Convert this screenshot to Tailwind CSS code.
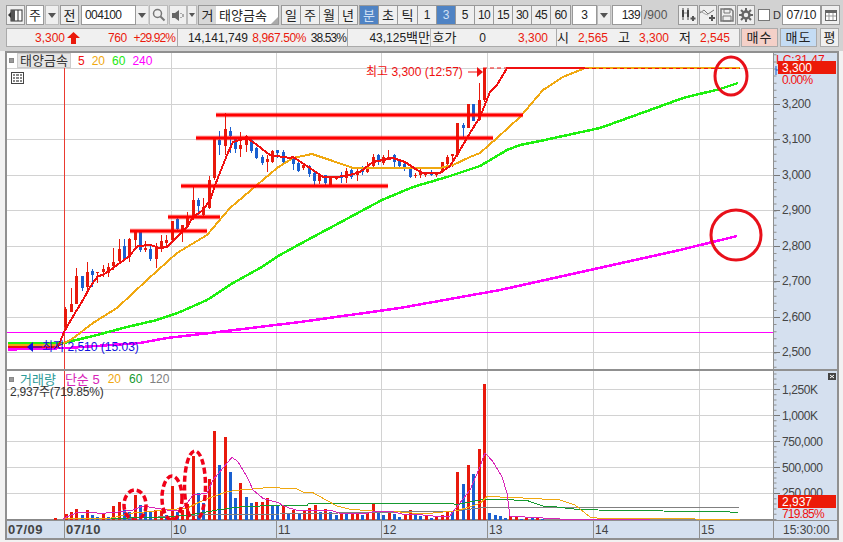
<!DOCTYPE html>
<html lang="ko">
<head>
<meta charset="utf-8">
<script src="https://cdn.jsdelivr.net/npm/@tailwindcss/browser@4"></script>
<title>태양금속</title>
</head>
<body class="w-[843px] h-[542px] overflow-hidden bg-[#f2f2f2] text-[12px] leading-none text-[#222] font-['Liberation_Sans','Noto_Sans_CJK_KR',sans-serif]">
<header class="h-[51px] bg-[#d2d2d2] pl-[6px] pt-[5px]">
  <div class="flex h-[20px] gap-[1px]">
    <div class="w-[19px] flex items-center justify-center bg-[#efefef] border border-[#999]"><svg width="15" height="13" viewBox="0 0 15 13"><path d="M0 6l3-3v6z" fill="#333"/><rect x="3" y="1" width="11" height="11" fill="#fff" stroke="#333"/><path d="M3 1h4v11H3z" fill="#555"/><path d="M10 1v11" stroke="#333"/></svg></div>
    <div class="w-[18px] flex items-center justify-center bg-white border border-[#999] text-[13px]">주</div>
    <div class="w-[14px] flex items-center justify-center bg-[#efefef] border border-[#bbb]"><span class="border-x-[4px] border-x-transparent border-t-[5px] border-t-[#555]"></span></div>
    <div class="w-[19px] flex items-center justify-center bg-[#efefef] border border-[#999] text-[13px]">전</div>
    <div class="w-[55px] ml-[1px] flex items-center pl-[3px] bg-white border border-[#999] tracking-[-0.6px]">004100</div>
    <div class="w-[12px] flex items-center justify-center bg-[#efefef] border-y border-[#bbb] -ml-[1px]"><span class="border-x-[4px] border-x-transparent border-t-[5px] border-t-[#555]"></span></div>
    <div class="w-[19px] flex items-center justify-center bg-[#efefef] border border-[#bbb]"><svg width="14" height="14" viewBox="0 0 14 14"><circle cx="5.500" cy="5.500" r="4" fill="none" stroke="#777" stroke-width="1.500"/><path d="M8.500 8.500l4 4" stroke="#777" stroke-width="2"/></svg></div>
    <div class="w-[18px] flex items-center justify-center bg-[#efefef] border border-[#bbb]"><svg width="14" height="13" viewBox="0 0 14 13"><path d="M1 4h3l4-3v11L4 9H1z" fill="#666"/><path d="M10 4v1M10 8v1M12 5v3" stroke="#666"/></svg></div>
    <div class="w-[10px] flex items-center justify-center bg-[#efefef] border border-[#bbb] -ml-[1px]"><span class="border-x-[3px] border-x-transparent border-t-[4px] border-t-[#555]"></span></div>
    <div class="relative w-[81px] flex items-center bg-white border border-[#999] text-[13px]"><span class="w-[17px] h-[18px] flex items-center justify-center bg-[#d8d8d8]">거</span><span class="ml-[3px]">태양금속</span><span class="absolute right-0 bottom-0 w-0 h-0 border-l-[7px] border-l-transparent border-b-[7px] border-b-[#aaa]"></span></div>
    <div class="flex ml-[1px] text-[13px]">
      <div class="w-[20px] flex items-center justify-center bg-[#efefef] border border-[#999]">일</div>
      <div class="w-[19px] flex items-center justify-center bg-[#efefef] border border-l-0 border-[#999]">주</div>
      <div class="w-[19px] flex items-center justify-center bg-[#efefef] border border-l-0 border-[#999]">월</div>
      <div class="w-[19px] flex items-center justify-center bg-[#efefef] border border-l-0 border-[#999]">년</div>
    </div>
    <div class="flex">
      <div class="w-[20px] flex items-center justify-center bg-[#4f83c4] text-[#cfe0f5] border border-[#999] text-[13px]">분</div>
      <div class="w-[19px] flex items-center justify-center bg-[#efefef] border border-l-0 border-[#999] text-[13px]">초</div>
      <div class="w-[20px] flex items-center justify-center bg-[#efefef] border border-l-0 border-[#999] text-[13px]">틱</div>
      <div class="w-[19px] flex items-center justify-center bg-[#efefef] border border-l-0 border-[#999]">1</div>
      <div class="w-[19px] flex items-center justify-center bg-[#4f83c4] text-[#cfe0f5] border border-l-0 border-[#999]">3</div>
      <div class="w-[19px] flex items-center justify-center bg-[#efefef] border border-l-0 border-[#999]">5</div>
      <div class="w-[19px] flex items-center justify-center bg-[#efefef] border border-l-0 border-[#999] tracking-[-0.6px]">10</div>
      <div class="w-[19px] flex items-center justify-center bg-[#efefef] border border-l-0 border-[#999] tracking-[-0.6px]">15</div>
      <div class="w-[19px] flex items-center justify-center bg-[#efefef] border border-l-0 border-[#999] tracking-[-0.6px]">30</div>
      <div class="w-[19px] flex items-center justify-center bg-[#efefef] border border-l-0 border-[#999] tracking-[-0.6px]">45</div>
      <div class="w-[20px] flex items-center justify-center bg-[#efefef] border border-l-0 border-[#999] tracking-[-0.6px]">60</div>
    </div>
    <div class="w-[25px] flex items-center justify-center bg-white border border-[#999]">3</div>
    <div class="w-[14px] -ml-[1px] flex items-center justify-center bg-[#efefef] border border-[#bbb]"><span class="border-x-[4px] border-x-transparent border-t-[5px] border-t-[#555]"></span></div>
    <div class="w-[30px] flex items-center justify-end pr-[1px] bg-white border border-[#999] tracking-[-0.6px]">139</div>
    <div class="w-[34px] flex items-center text-[#555] pl-[1px]">/900</div>
    <div class="w-[20px] flex items-center justify-center bg-[#efefef] border border-[#999]"><svg width="16" height="14" viewBox="0 0 16 14"><path d="M2 2h2v7H2zM7 2h2v7H7z" fill="#444"/><path d="M3 0v12M8 0v12" stroke="#444"/><path d="M4 5h3" stroke="#888"/><path d="M13 8v5M10.500 10.500h5" stroke="#555" stroke-width="2"/></svg></div>
    <div class="w-[18px] flex items-center justify-center bg-[#efefef] border border-[#999]"><svg width="16" height="14" viewBox="0 0 16 14"><path d="M0 5l4-3 4 4 6-4" fill="none" stroke="#777"/><path d="M0 3l5 3 3 1" fill="none" stroke="#aaa"/><path d="M12 7v6M9 10h6" stroke="#555" stroke-width="2"/></svg></div>
    <div class="w-[18px] flex items-center justify-center bg-[#efefef] border border-[#999]"><svg width="14" height="14" viewBox="0 0 14 14"><path d="M1 1h10l2 2v10H1z" fill="none" stroke="#777" stroke-width="1.500"/><path d="M4 1h6v4H4zM3 8h8v5H3z" fill="none" stroke="#777"/></svg></div>
    <div class="w-[18px] flex items-center justify-center bg-[#efefef] border border-[#999]"><svg width="14" height="14" viewBox="0 0 14 14"><circle cx="7" cy="7" r="3.500" fill="none" stroke="#666" stroke-width="2.500"/><path d="M7 0v3M7 11v3M0 7h3M11 7h3M2 2l2 2M10 10l2 2M12 2l-2 2M4 10l-2 2" stroke="#666" stroke-width="2"/></svg></div>
    <div class="w-[12px] h-[12px] self-center ml-[2px] bg-white border border-[#777]"></div>
    <div class="w-[10px] flex items-center text-[11px] text-[#333] pl-[2px]">D</div>
    <div class="w-[39px] flex items-center justify-center bg-white border border-[#999]">07/10</div>
    <div class="w-[19px] -ml-[1px] flex items-center justify-center bg-[#efefef] border border-[#999]"><svg width="12" height="12" viewBox="0 0 12 12"><rect x=".5" y="1.500" width="11" height="10" fill="#fff" stroke="#666"/><path d="M0 2h12v2H0z" fill="#666"/><path d="M4 4v7M8 4v7M1 7h10" stroke="#999"/></svg></div>
  </div>
  <div class="flex h-[19px] mt-[3px]">
    <div class="w-[172px] flex items-center bg-[#f0f0f0] border border-[#aaa] text-[#ea1a0c]">
      <span class="w-[58px] text-right">3,300</span>
      <svg class="ml-[2px]" width="13" height="12" viewBox="0 0 13 12"><path d="M6.500 0L13 6H9v6H4V6H0z" fill="#ea1a0c"/></svg>
      <span class="w-[47px] text-right tracking-[-0.3px]">760</span>
      <span class="w-[48px] text-right tracking-[-0.9px]">+29.92%</span>
    </div>
    <div class="w-[170px] flex items-center bg-[#f0f0f0] border border-l-0 border-[#aaa]">
      <span class="w-[70px] text-right">14,141,749</span>
      <span class="w-[58px] text-right text-[#ea1a0c] tracking-[-0.4px]">8,967.50%</span>
      <span class="w-[40px] text-right tracking-[-0.9px]">38.53%</span>
    </div>
    <div class="w-[209px] flex items-center bg-[#f0f0f0] border border-l-0 border-[#aaa]">
      <span class="w-[82px] text-right">43,125<span class="text-[13px]">백만</span></span>
      <span class="w-[28px] h-full flex items-center justify-center border-l border-[#bbb] text-[13px]">호가</span>
      <span class="w-[28px] text-right">0</span>
      <span class="w-[62px] text-right text-[#ea1a0c]">3,300</span>
    </div>
    <div class="w-[183px] flex items-center bg-[#f0f0f0] border border-l-0 border-[#aaa]">
      <span class="w-[12px] text-center text-[13px]">시</span>
      <span class="w-[39px] text-right text-[#ea1a0c]">2,565</span>
      <span class="w-[22px] text-right text-[13px]">고</span>
      <span class="w-[39px] text-right text-[#ea1a0c]">3,300</span>
      <span class="w-[22px] text-right text-[13px]">저</span>
      <span class="w-[39px] text-right text-[#ea1a0c]">2,545</span>
    </div>
    <div class="w-[37px] ml-[1px] flex items-center justify-center bg-[#f4d0c8] border border-[#aaa] text-[13px] tracking-[1px]">매수</div>
    <div class="w-[37px] ml-[2px] flex items-center justify-center bg-[#c4dcf4] border border-[#aaa] text-[13px] tracking-[1px]">매도</div>
    <div class="w-[19px] ml-[3px] flex items-center justify-center bg-[#f0f0f0] border border-[#aaa] text-[13px]">평</div>
  </div>
</header>
<main class="w-[834px] h-[489px] ml-[5px] border-2 border-[#909090] bg-white flex flex-col">
  <section class="flex h-[316px] shrink-0">
    <div class="relative w-[766px] bg-white">
      <svg class="block" width="766" height="316" viewBox="7 53 766 316" fill="none">
        <path d="M7 68.500H773M7 104.500H773M7 139.500H773M7 175.500H773M7 210.500H773M7 246.500H773M7 281.500H773M7 317.500H773M7 352.500H773M171.500 53V369M276.500 53V369M381.500 53V369M487.500 53V369M593.500 53V369M699.500 53V369" stroke="#d2d2d2"/>
        <path d="M64.500 53V369" stroke="#ea3a30"/>
        <path d="M6 332.500H773" stroke="#ff00ff"/>
        <g transform="translate(60 100) scale(.33333)" shape-rendering="crispEdges">
          <path d="M18 620V692M34 565V635M49 505V612M82 487V572M113 515V550M130 495V530M145 490V530M160 445V510M178 418V490M208 415V487M226 395V450M256 422V455M289 430V503M304 405V455M319 405V445M337 363V420M367 375V425M382 335V385M400 260V360M430 295V350M448 228V328M464 115V240M496 40V165M541 97V170M559 105V155M622 165V215M637 150V190" stroke="#e8190c" stroke-width="3"/>
          <path d="M18 628V680M34 612V635M49 528V612M82 515V560M113 515V520M130 507V515M145 500V518M160 487V498M178 447V483M208 417V470M226 395V420M256 445V450M289 445V476M304 423V445M319 420V430M337 363V420M367 375V395M382 350V382M400 300V350M430 320V345M448 240V325M464 115V235M496 87V137M541 135V147M559 108V135M622 177V187M637 152V185" stroke="#e8190c" stroke-width="9"/>
          <path d="M67 528V572M97 508V560M193 418V480M241 395V455M271 433V482M352 355V395M415 295V345M478 92V165M511 82V158M526 118V160M574 118V158M589 140V177M607 165V195M652 150V175M670 150V190M700 170V210M717 182V215" stroke="#1a5fd0" stroke-width="3"/>
          <path d="M67 528V563M97 513V525M193 438V477M241 395V450M271 448V476M352 358V388M415 300V318M478 120V135M511 93V108M526 118V148M574 120V152M589 145V173M607 172V188M652 150V158M670 157V185M700 177V192M717 190V213" stroke="#1a5fd0" stroke-width="9"/>
        </g>
        <g transform="translate(280 60) scale(.33333)" shape-rendering="crispEdges">
          <path d="M72 312V330M120 345V372M152 350V375M169 347V360M199 325V370M232 325V362M263 305V340M280 282V322M310 285V315M327 270V300M406 340V355M422 325V355M438 335V352M470 335V350M487 305V340M502 285V318M517 283V320M532 190V290M565 132V205M598 70V183M613 25V125" stroke="#e8190c" stroke-width="3"/>
          <path d="M72 315V323M120 345V362M152 350V375M169 348V357M199 333V355M232 333V345M263 323V335M280 290V318M310 290V310M327 290V297M406 345V347M422 335V345M438 337V345M470 338V345M487 305V335M502 290V312M517 283V288M532 190V285M565 132V205M598 120V180M613 25V120" stroke="#e8190c" stroke-width="9"/>
          <path d="M88 315V350M105 335V375M136 345V378M184 335V368M216 325V358M248 318V345M295 283V315M343 282V320M358 297V325M375 308V333M392 320V355M454 330V348M550 190V235M580 132V182" stroke="#1a5fd0" stroke-width="3"/>
          <path d="M88 318V342M105 338V362M136 345V370M184 345V355M216 330V352M248 323V335M295 285V305M343 285V305M358 303V317M375 312V328M392 325V352M454 335V345M550 195V205M580 132V182" stroke="#1a5fd0" stroke-width="9"/>
        </g>
        <g stroke-width="2" stroke-linejoin="round" shape-rendering="crispEdges">
          <path d="M8 349.500L67 348L140 343L167 338L210 333L300 322L400 308L500 290L590 270L680 250L737 236" stroke="#ff00ff" stroke-width="2.500"/>
          <path d="M8 343H64L97 335L127 327L157 320L180 312L207 300L233 283L260 268L280 255L300 244L382 200L413 187L447 177L480 166L507 150L520 145L540 141L600 128L650 110L683 98L720 89L738 83" stroke="#1ef010" stroke-width="2.500"/>
          <path d="M8 345H60L72 339L93 323L117 308L147 280L177 253L207 235L230 208L257 185L277 168L293 158L312 154L330 160L353 168L373 168H440L453 165L470 157L480 153L497 138L520 117L543 90L563 77L585 68H740" stroke="#f0a810"/>
          <path d="M8 347H58L64 332L75 313L83 300L90 287L98 276L103 275L113 268L128 257L138 246L150 245L160 248L167 247L177 237L187 227L193 217L203 210L210 200L217 180L227 155L233 142L247 138L257 145L270 155L290 158L293 157L310 168L323 177L337 177L350 175L360 172L373 162L393 158L405 162L417 170L423 173L440 173L450 166L460 150L470 133L480 117L490 92L497 85L507 68H585" stroke="#f01010"/>
        </g>
        <path d="M483 68H507M585 68.500H740" stroke="#f01010" stroke-dasharray="4 3"/>
        <path d="M216 115H523M196 138H493M181 186H388M168 217H220M130 231H207" stroke="#ff0000" stroke-opacity=".3" stroke-width="5"/>
        <path d="M216 115H523M196 138H493M181 186H388M168 217H220M130 231H207" stroke="#ff0000" stroke-width="3"/>
        <ellipse cx="731" cy="76" rx="16" ry="19" stroke="#e8101a" stroke-width="3"/>
        <circle cx="736" cy="235" r="25" stroke="#e8101a" stroke-width="3"/>
        <path d="M468 72H478" stroke="#f01010"/>
        <path d="M477 67L483 72L477 77Z" fill="#f01010"/>
        <path d="M27 347L33 342V352Z" fill="#1010e0"/>
        <path d="M33 347H42" stroke="#1010e0"/>
        <text x="366" y="75.500" fill="#f01010" font-size="12">최고 3,300 (12:57)</text>
        <text x="42" y="351" fill="#1010e0" font-size="12">최저 2,510 (15:03)</text>
      </svg>
      <div class="absolute left-0 top-0 flex items-center h-[15px]">
        <span class="w-[5px] h-[5px] ml-[2px] bg-[#999] border border-[#888]"></span>
        <span class="ml-[3px] h-[15px] w-[54px] flex items-center justify-center bg-[#e6e6e6] border border-[#ccc] text-[#333] text-[13px]">태양금속</span>
        <span class="ml-[7px] text-[#f01010]">5</span>
        <span class="ml-[7px] text-[#f0a810]">20</span>
        <span class="ml-[7px] text-[#22e810]">60</span>
        <span class="ml-[7px] text-[#ff00ff]">240</span>
      </div>
      <div class="absolute left-[4px] top-[19px] w-[13px] h-[12px] border border-[#444] bg-white grid grid-cols-3 grid-rows-3 gap-[1px] p-[1px]">
        <span class="bg-[#888]"></span><span class="bg-[#888]"></span><span class="bg-[#888]"></span><span class="bg-[#888]"></span><span class="bg-[#888]"></span><span class="bg-[#888]"></span><span class="bg-[#888]"></span><span class="bg-[#888]"></span><span class="bg-[#888]"></span>
      </div>
    </div>
    <div class="relative w-[64px] bg-[#d5e0ef] border-l border-[#909090]">
      <svg class="block" width="63" height="316" viewBox="774 53 63 316" fill="none">
        <path d="M775 54.300V369" stroke="#909090" stroke-width="3" stroke-dasharray="1 6.100"/>
        <path d="M774 104.500H780M774 139.500H780M774 175.500H780M774 210.500H780M774 246.500H780M774 281.500H780M774 317.500H780M774 352.500H780" stroke="#777"/>
        <g fill="#444" font-size="12" letter-spacing="-.3">
          <text x="782" y="108">3,200</text><text x="782" y="143">3,100</text><text x="782" y="179">3,000</text><text x="782" y="214">2,900</text><text x="782" y="250">2,800</text><text x="782" y="285">2,700</text><text x="782" y="321">2,600</text><text x="782" y="356">2,500</text>
        </g>
        <text x="776" y="63.500" fill="#f01010" font-size="12">LC:31.47</text>
        <path d="M776 66v9M776 70h3" stroke="#1a5fd0"/>
        <text x="782" y="84" fill="#f01010" font-size="12" letter-spacing="-.7">0.00%</text>
      </svg>
      <span class="absolute left-[4px] top-[8px] w-[58px] h-[13px] pl-[4px] flex items-center bg-[#ec1a08] text-white">3,300</span>
    </div>
  </section>
  <div class="h-[2px] bg-[#909090] shrink-0"></div>
  <section class="flex h-[149px] shrink-0">
    <div class="relative w-[766px] bg-white">
      <svg class="block" width="766" height="149" viewBox="7 371 766 149" fill="none">
        <path d="M7 389.500H773M7 415.500H773M7 441.500H773M7 467.500H773M7 493.500H773M171.500 371V520M276.500 371V520M381.500 371V520M487.500 371V520M593.500 371V520M699.500 371V520" stroke="#d2d2d2"/>
        <path d="M64.500 371V520" stroke="#ea3a30"/>
        <path d="M7 519.500H773" stroke="#888"/>
        <path d="M55.500 518V520M66.500 514V520M71.500 512V520M76.500 509V520M87.500 510V520M103.500 513V520M113.500 506V520M119.500 502V520M135.500 495V520M155.500 510V520M161.500 510V520M172.500 486V520M182.500 510V520M187.500 504V520M193.500 456V520M209.500 479V520M214.500 431V520M225.500 437V520M240.500 483V520M256.500 502V520M262.500 502V520M267.500 498V520M283.500 505V520M293.500 510V520M304.500 510V520M309.500 508V520M315.500 505V520M325.500 509V520M341.500 513V520M352.500 513V520M357.500 513V520M367.500 512V520M373.500 504V520M389.500 512V520M405.500 514V520M410.500 510V520M426.500 516V520M436.500 516V520M442.500 515V520M447.500 512V520M457.500 472V520M468.500 465V520M479.500 449V520M484.500 384V520M510.500 516V520M516.500 517V520M526.500 517V520M537.500 517V520" stroke="#e8190c" stroke-width="3"/>
        <path d="M82.500 515V520M92.500 515V520M97.500 517V520M108.500 517V520M124.500 510V520M129.500 512V520M140.500 505V520M145.500 510V520M150.500 512V520M166.500 515V520M177.500 512V520M198.500 493V520M203.500 503V520M219.500 465V520M230.500 472V520M235.500 498V520M246.500 497V520M251.500 503V520M272.500 505V520M277.500 505V520M288.500 513V520M299.500 513V520M320.500 512V520M330.500 512V520M336.500 515V520M346.500 513V520M362.500 515V520M378.500 511V520M383.500 515V520M394.500 514V520M399.500 517V520M415.500 515V520M420.500 516V520M431.500 518V520M452.500 512V520M463.500 484V520M473.500 474V520M489.500 513V520M495.500 515V520M500.500 516V520M505.500 518V520M521.500 519V520M532.500 518V520M542.500 519V520" stroke="#1a5fd0" stroke-width="3"/>
        <g stroke-width="1" stroke-linejoin="round" shape-rendering="crispEdges">
          <path d="M117 519L200 515L280 514L397 512L453 511L480 508L487 507.500H739" stroke="#808080"/>
          <path d="M90 519L167 517L190 515L217 510L240 507L280 505L307 505.500L308 504L343 503.500H450L457 504.500L480 500L487 499L527 500.500L543 506L557 507L578 509.500L598 510L630 510.500L730 512L738 513" stroke="#159a30"/>
          <path d="M63 519L110 518.300L133 513L150 511.500L173 509.300L187 508.300L200 501.700L213 496.700L227 491.700L240 490L267 487.700L280 488L295 488L303 492L313 492.700L323 498.300L337 506L350 509.300L373 511L397 511.700L423 514L457 510.700L470 506.700L480 503.300L487 496.700L493 496.700L530 498.300L560 500L575 505L590 517L600 518.500H650L740 519.500" stroke="#f0a810"/>
          <path d="M63 519L67 516.700L77 512.700L90 512.300L100 513.300L113 512.700L133 510L143 506L157 508.300L167 510L180 510L187 503.300L193 495L207 493.300L213 480L227 463.300L232 457.300L238 461.700L247 476.700L253 490L263 498.300L280 503.300L280 504.300L290 508.300L300 511L320 510.700L330 510L340 513.300L363 514L377 511L393 511.700L403 514.300L423 515L433 516L450 516L457 506.700L470 490L480 466.700L485 452.700L493 461.700L502 476.700L507 493.300L510 516L520 516.700L560 519L650 519.300" stroke="#d824b8"/>
        </g>
        <g stroke="#f00018" stroke-width="3.500" stroke-dasharray="6 3">
          <ellipse cx="135" cy="505" rx="11" ry="15"/>
          <ellipse cx="172" cy="498" rx="10" ry="22"/>
          <ellipse cx="195" cy="486" rx="10.500" ry="35"/>
        </g>
      </svg>
      <div class="absolute left-0 top-0 flex items-center h-[14px] mt-[1px]">
        <span class="w-[5px] h-[5px] ml-[2px] bg-[#999] border border-[#888]"></span>
        <span class="ml-[6px] text-[#2a9a98] text-[13px]">거래량</span>
        <span class="ml-[9px] text-[#d824b8] text-[13px]">단순 5</span>
        <span class="ml-[8px] text-[#f0a810]">20</span>
        <span class="ml-[8px] text-[#159a30]">60</span>
        <span class="ml-[7px] text-[#808080]">120</span>
      </div>
      <span class="absolute left-[3px] top-[15px] text-[#333] tracking-[-0.2px]">2,937주(719.85%)</span>
    </div>
    <div class="relative w-[64px] bg-[#d5e0ef] border-l border-[#909090]">
      <svg class="block" width="63" height="149" viewBox="774 371 63 149" fill="none">
        <path d="M775 373.400V520" stroke="#909090" stroke-width="3" stroke-dasharray="1 4.200"/>
        <path d="M774 389.500H780M774 415.500H780M774 441.500H780M774 467.500H780M774 493.500H780" stroke="#777"/>
        <g fill="#444" font-size="12" letter-spacing="-.4">
          <text x="782" y="393.500">1,250K</text><text x="782" y="419.500">1,000K</text><text x="782" y="445.500">750,000</text><text x="782" y="471.500">500,000</text><text x="782" y="496.500">250,000</text>
        </g>
        <text x="782" y="518" fill="#f01010" font-size="12" letter-spacing="-.8">719.85%</text>
        <rect x="828" y="373" width="8" height="7" fill="#444"/>
        <path d="M830 375l4 3M834 375l-4 3" stroke="#fff"/>
      </svg>
      <span class="absolute left-[4px] top-[124px] w-[58px] h-[13px] pl-[4px] flex items-center bg-[#ec1a08] text-white">2,937</span>
    </div>
  </section>
  <footer class="relative h-[18px] shrink-0 flex items-center bg-[#d5e0ef] border-t border-[#909090] text-[#444]">
    <span class="absolute left-[1px] font-bold text-[13px] tracking-[0.5px]">07/09</span>
    <span class="absolute left-[57px] h-full flex items-center font-bold text-[13px] tracking-[0.5px] border-l border-[#909090] pl-[1px]">07/10</span>
    <span class="absolute left-[164px] h-full flex items-center border-l border-[#909090] pl-[1px]">10</span>
    <span class="absolute left-[269px] h-full flex items-center border-l border-[#909090] pl-[1px]">11</span>
    <span class="absolute left-[374px] h-full flex items-center border-l border-[#909090] pl-[1px]">12</span>
    <span class="absolute left-[480px] h-full flex items-center border-l border-[#909090] pl-[1px]">13</span>
    <span class="absolute left-[586px] h-full flex items-center border-l border-[#909090] pl-[1px]">14</span>
    <span class="absolute left-[692px] h-full flex items-center border-l border-[#909090] pl-[1px]">15</span>
    <span class="absolute left-[766px] h-full flex items-center border-l border-[#909090] pl-[9px]">15:30:00</span>
  </footer>
</main>
</body>
</html>
